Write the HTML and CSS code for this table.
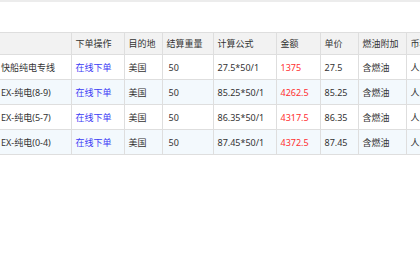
FILE: index.html
```html
<!DOCTYPE html>
<html lang="zh-CN">
<head>
<meta charset="utf-8">
<title>报价</title>
<link rel="stylesheet" href="styles.css">
</head>
<body>
<div class="topbar"></div>
<div class="wrap">
<table class="price-table">
  <colgroup>
    <col class="c-name"><col class="c-op"><col class="c-dest"><col class="c-weight"><col class="c-formula"><col class="c-amount"><col class="c-unit"><col class="c-fuel"><col class="c-cur">
  </colgroup>
  <thead>
    <tr><th class="first"></th><th>下单操作</th><th>目的地</th><th>结算重量</th><th>计算公式</th><th>金额</th><th>单价</th><th>燃油附加</th><th>币种</th></tr>
  </thead>
  <tbody>
    <tr><td class="first">快船纯电专线</td><td><a class="link" href="#">在线下单</a></td><td>美国</td><td class="num">50</td><td>27.5*50/1</td><td class="amount">1375</td><td>27.5</td><td>含燃油</td><td>人民币</td></tr>
    <tr class="alt"><td class="first">EX-纯电(8-9)</td><td><a class="link" href="#">在线下单</a></td><td>美国</td><td class="num">50</td><td>85.25*50/1</td><td class="amount">4262.5</td><td>85.25</td><td>含燃油</td><td>人民币</td></tr>
    <tr><td class="first">EX-纯电(5-7)</td><td><a class="link" href="#">在线下单</a></td><td>美国</td><td class="num">50</td><td>86.35*50/1</td><td class="amount">4317.5</td><td>86.35</td><td>含燃油</td><td>人民币</td></tr>
    <tr class="alt"><td class="first">EX-纯电(0-4)</td><td><a class="link" href="#">在线下单</a></td><td>美国</td><td class="num">50</td><td>87.45*50/1</td><td class="amount">4372.5</td><td>87.45</td><td>含燃油</td><td>人民币</td></tr>
  </tbody>
</table>
</div>
</body>
</html>
```
FILE: styles.css
```css
html, body {
  margin: 0;
  padding: 0;
  overflow: hidden;
  background: #fff;
}
body {
  font-family: "Noto Sans", "Noto Sans CJK SC", sans-serif;
  font-size: 9px;
  color: #333;
}
.topbar {
  height: 2px;
  background: #ececec;
}
.wrap {
  padding-top: 30px;
}
.price-table {
  border-collapse: collapse;
  table-layout: fixed;
  width: 456px;
}
.c-name { width: 71px; }
.c-op { width: 53px; }
.c-dest { width: 38px; }
.c-weight { width: 51px; }
.c-formula { width: 63px; }
.c-amount { width: 44px; }
.c-unit { width: 38px; }
.c-fuel { width: 48px; }
.c-cur { width: 50px; }
.price-table th,
.price-table td {
  border: 1px solid #dedede;
  padding: 0 4px;
  text-align: left;
  white-space: nowrap;
  overflow: hidden;
  font-weight: normal;
}
.price-table th {
  height: 21px;
  background: #f2f2f2;
  color: #333;
}
.price-table td {
  height: 24px;
}
.price-table .first {
  border-left: none;
  padding-left: 1px;
}
.price-table .num {
  padding-left: 6px;
}
.alt td {
  background: #f3f9fd;
}
.link {
  color: #3b3bf5;
  text-decoration: none;
}
.amount {
  color: #ff3030;
}
```
